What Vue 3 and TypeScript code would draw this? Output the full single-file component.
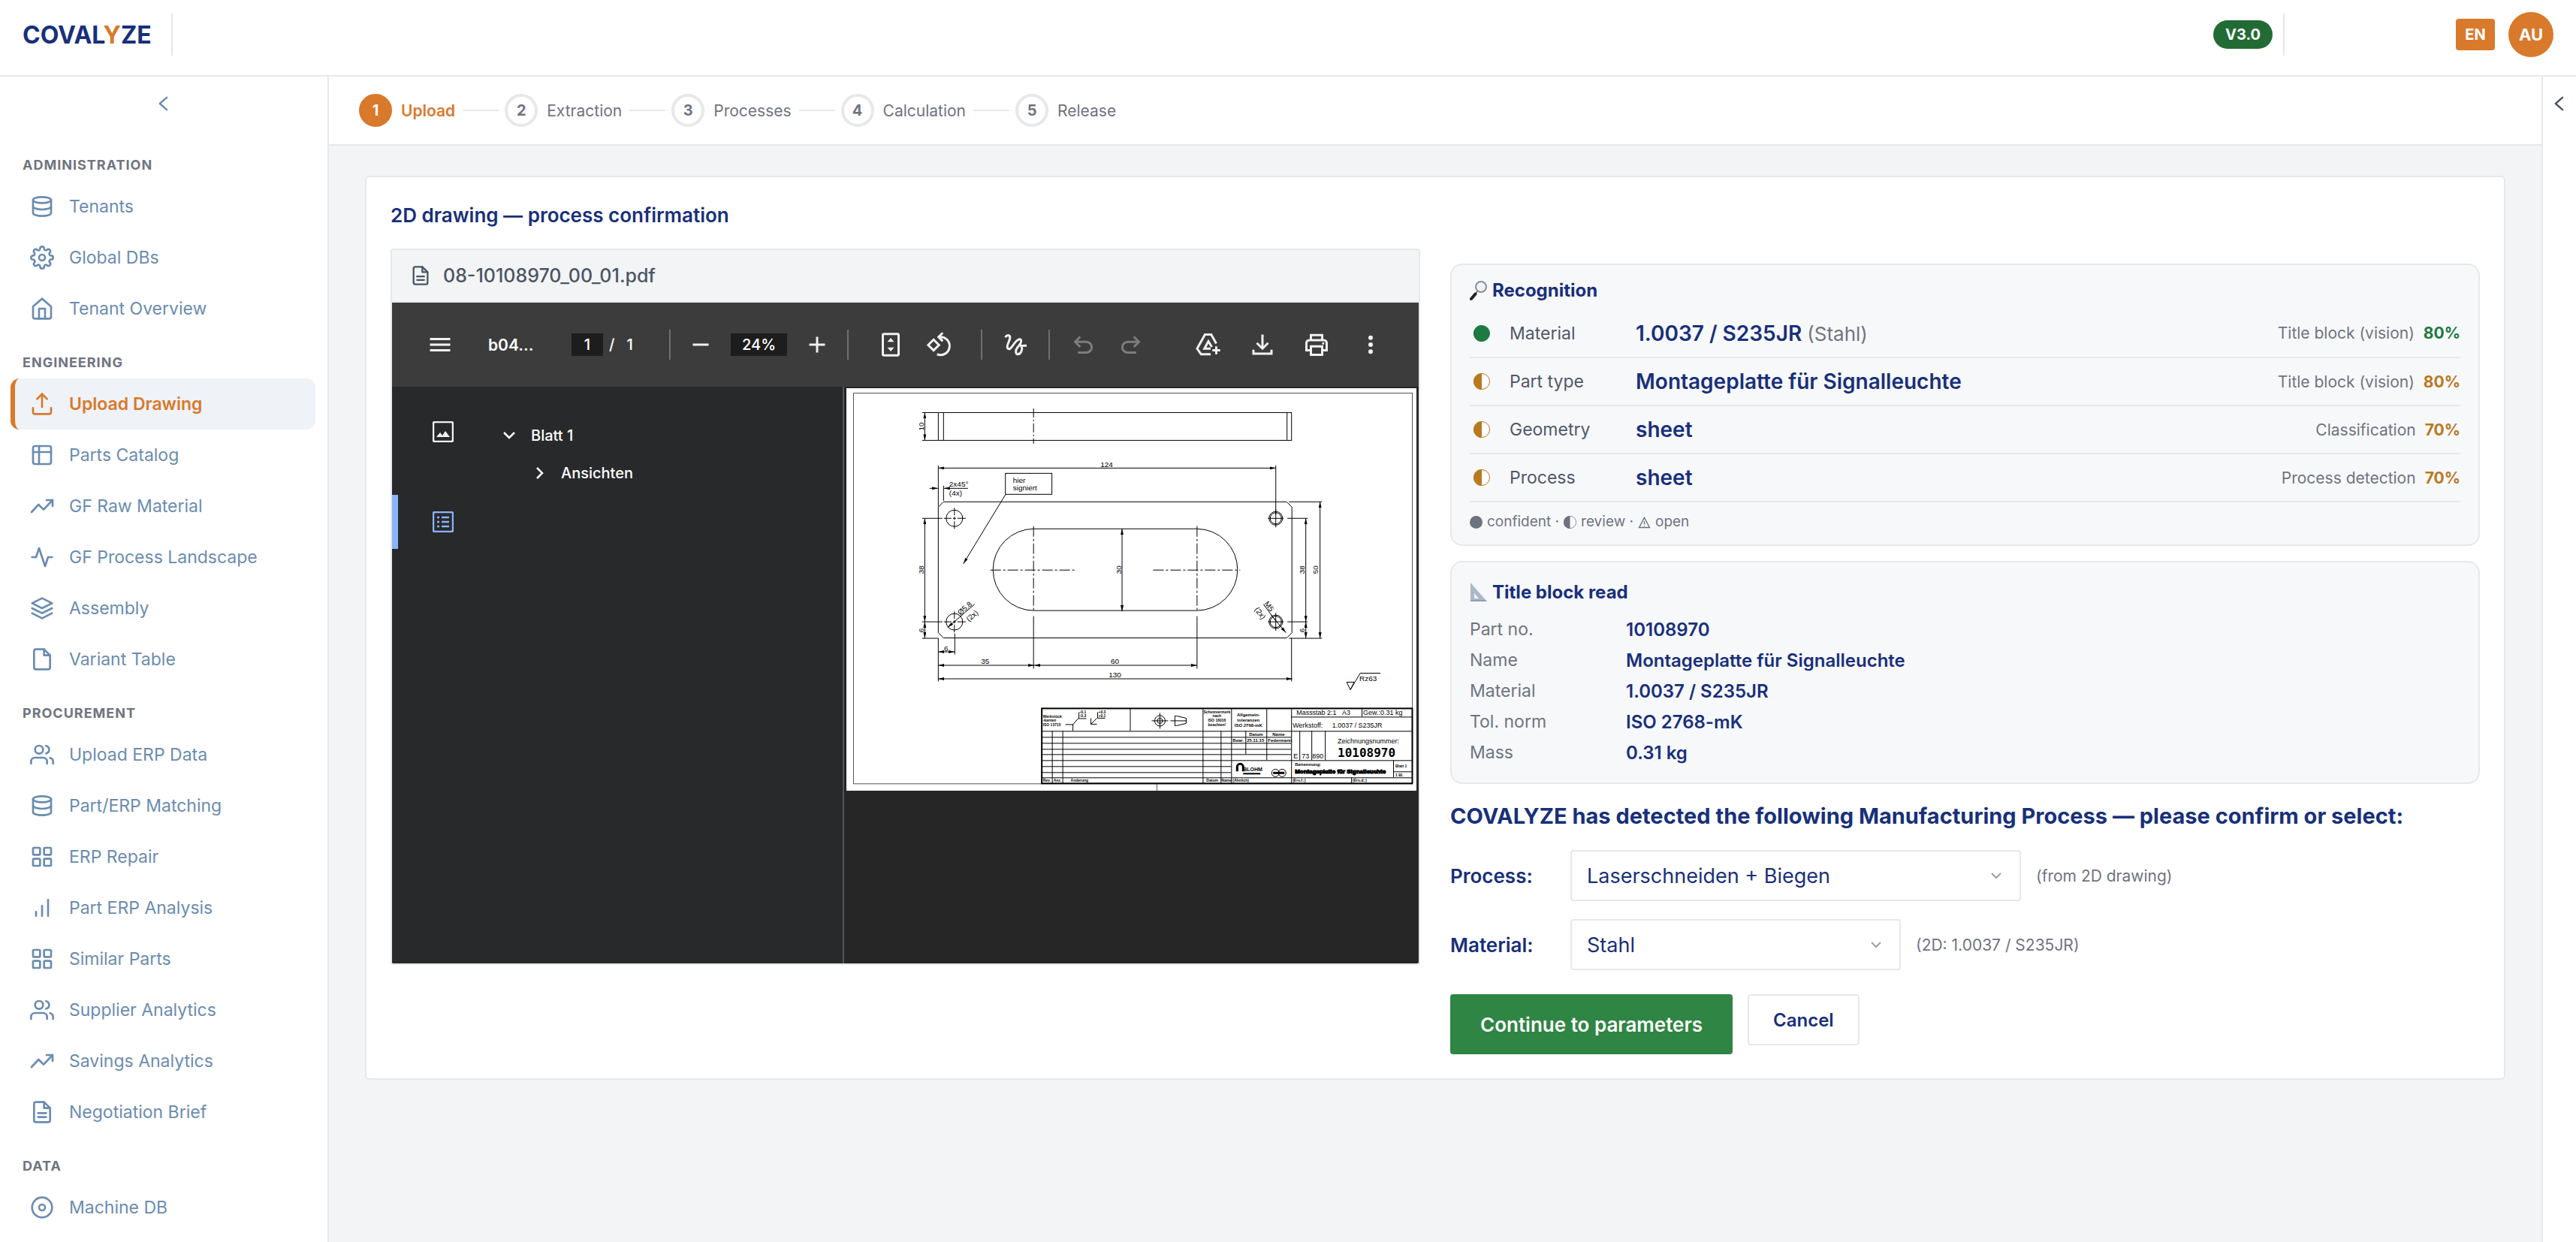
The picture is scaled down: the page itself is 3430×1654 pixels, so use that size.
<script setup lang="ts">
import { ref } from 'vue'

type Shape = { d: string; fill?: boolean }
interface NavItem { label: string; icon: string; active?: boolean }
interface NavGroup { title: string; items: NavItem[] }
interface Finding { label: string; value: string; note?: string; source: string; score: string; sure: boolean }

const icons: Record<string, string[]> = {
  database: ['M3 5.5C3 3.8 7 2.5 12 2.5s9 1.3 9 3-4 3-9 3-9-1.300-9-3z', 'M3 5.500v13c0 1.700 4 3 9 3s9-1.300 9-3v-13', 'M3 12c0 1.700 4 3 9 3s9-1.300 9-3'],
  gear: [
    'M12 9a3 3 0 1 0 0 6 3 3 0 0 0 0-6z',
    'M19.400 15a1.650 1.650 0 0 0 .33 1.820l.06.06a2 2 0 0 1 0 2.830 2 2 0 0 1-2.830 0l-.06-.06a1.650 1.650 0 0 0-1.820-.33 1.650 1.650 0 0 0-1 1.510V21a2 2 0 0 1-2 2 2 2 0 0 1-2-2v-.09A1.650 1.650 0 0 0 9 19.400a1.650 1.650 0 0 0-1.820.33l-.06.06a2 2 0 0 1-2.830 0 2 2 0 0 1 0-2.830l.06-.06a1.650 1.650 0 0 0 .33-1.820 1.650 1.650 0 0 0-1.510-1H3a2 2 0 0 1-2-2 2 2 0 0 1 2-2h.09A1.650 1.650 0 0 0 4.600 9a1.650 1.650 0 0 0-.33-1.820l-.06-.06a2 2 0 0 1 0-2.830 2 2 0 0 1 2.830 0l.06.06a1.650 1.650 0 0 0 1.820.33H9a1.650 1.650 0 0 0 1-1.510V3a2 2 0 0 1 2-2 2 2 0 0 1 2 2v.09a1.650 1.650 0 0 0 1 1.510 1.650 1.650 0 0 0 1.820-.33l.06-.06a2 2 0 0 1 2.830 0 2 2 0 0 1 0 2.830l-.06.06a1.650 1.650 0 0 0-.33 1.820V9a1.650 1.650 0 0 0 1.510 1H21a2 2 0 0 1 2 2 2 2 0 0 1-2 2h-.09a1.650 1.650 0 0 0-1.510 1z',
  ],
  home: ['M3 10l9-8 9 8v10a2 2 0 0 1-2 2H5a2 2 0 0 1-2-2z', 'M9 22V12h6v10'],
  upload: ['M3 16v4a2 2 0 0 0 2 2h14a2 2 0 0 0 2-2v-4', 'M17 7l-5-5-5 5', 'M12 2v13'],
  table: ['M5 3h14a2 2 0 0 1 2 2v14a2 2 0 0 1-2 2H5a2 2 0 0 1-2-2V5a2 2 0 0 1 2-2z', 'M3 9h18', 'M9 3v18'],
  trend: ['M1.500 18l7-7.500 5 5L22.500 6', 'M16.500 6h6v6'],
  pulse: ['M22 12h-4l-3 9L9 3l-3 9H2'],
  layers: ['M12 2L2 7l10 5 10-5z', 'M2 12l10 5 10-5', 'M2 17l10 5 10-5'],
  file: ['M14 2H6a2 2 0 0 0-2 2v16a2 2 0 0 0 2 2h12a2 2 0 0 0 2-2V8z', 'M14 2v6h6'],
  doc: ['M14 2H6a2 2 0 0 0-2 2v16a2 2 0 0 0 2 2h12a2 2 0 0 0 2-2V8z', 'M14 2v6h6', 'M8 13h8', 'M8 17h8'],
  users: ['M17 21v-2a4 4 0 0 0-4-4H5a4 4 0 0 0-4 4v2', 'M9 3a4 4 0 1 0 0 8 4 4 0 0 0 0-8z', 'M23 21v-2a4 4 0 0 0-3-3.870', 'M16 3.130a4 4 0 0 1 0 7.750'],
  grid: ['M4 3h5a1 1 0 0 1 1 1v5a1 1 0 0 1-1 1H4a1 1 0 0 1-1-1V4a1 1 0 0 1 1-1z', 'M15 3h5a1 1 0 0 1 1 1v5a1 1 0 0 1-1 1h-5a1 1 0 0 1-1-1V4a1 1 0 0 1 1-1z', 'M4 14h5a1 1 0 0 1 1 1v5a1 1 0 0 1-1 1H4a1 1 0 0 1-1-1v-5a1 1 0 0 1 1-1z', 'M15 14h5a1 1 0 0 1 1 1v5a1 1 0 0 1-1 1h-5a1 1 0 0 1-1-1v-5a1 1 0 0 1 1-1z'],
  bars: ['M18 20V4', 'M12 20V10', 'M6 20v-4'],
  disc: ['M12 2a10 10 0 1 0 0 20 10 10 0 0 0 0-20z', 'M12 9a3 3 0 1 0 0 6 3 3 0 0 0 0-6z'],
}

const toolIcons: Record<string, Shape[]> = {
  menu: [{ d: 'M3 6h18v2H3zM3 11h18v2H3zM3 16h18v2H3z', fill: true }],
  minus: [{ d: 'M5 11h14v2H5z', fill: true }],
  plus: [{ d: 'M11 5h2v6h6v2h-6v6h-2v-6H5v-2h6z', fill: true }],
  fit: [{ d: 'M6 2.500h12a1 1 0 0 1 1 1v17a1 1 0 0 1-1 1H6a1 1 0 0 1-1-1v-17a1 1 0 0 1 1-1z' }, { d: 'M12 6l3 3.500H9zM12 18l3-3.500H9z', fill: true }],
  rotate: [{ d: 'M7.400 7.500L12.200 12.300 7.400 17.100 2.600 12.300z' }, { d: 'M12.500 5.200a8 8 0 1 1-2 15.300' }, { d: 'M15.500 1.500L11.800 5.200l3.700 3.700' }],
  draw: [{ d: 'M3 5.500c2-3 5-2 4 1.500-.8 3-3 6-2 8 1.500 2.500 4-1 6-4s5-5 6-3-2 5-3.500 7-1.500 6 1 5.500 4-4 3-7c-.6-1.800-2-1.500-2.500-1.300M15 12.500c2 .8 4 .5 7 .3' }],
  undo: [{ d: 'M7.500 19H15a4.500 4.500 0 0 0 0-9.500H5' }, { d: 'M9.500 5L5 9.500 9.500 14' }],
  redo: [{ d: 'M16.500 19H9a4.500 4.500 0 0 1 0-9.500h10' }, { d: 'M14.500 5L19 9.500 14.500 14' }],
  drive: [{ d: 'M14 20.500H5.500L2 15.500 9 3h5.500l4.500 8' }, { d: 'M14 15.500H8.500L12 9l3 5' }, { d: 'M19 13.500v7M15.500 17h7' }],
  download: [{ d: 'M12 3v12' }, { d: 'M7 10.500l5 5 5-5' }, { d: 'M4 16.500V20h16v-3.500' }],
  print: [{ d: 'M7 8V3.500h10V8' }, { d: 'M7 17H3v-6.500A2.500 2.500 0 0 1 5.500 8h13a2.500 2.500 0 0 1 2.500 2.500V17h-4' }, { d: 'M7 13.500h10V21H7z' }, { d: 'M17 10h1.800v1.800H17z', fill: true }],
  more: [{ d: 'M12 3.800a2 2 0 1 1 0 4 2 2 0 0 1 0-4zM12 10a2 2 0 1 1 0 4 2 2 0 0 1 0-4zM12 16.200a2 2 0 1 1 0 4 2 2 0 0 1 0-4z', fill: true }],
}

const nav: NavGroup[] = [
  { title: 'ADMINISTRATION', items: [
    { label: 'Tenants', icon: 'database' }, { label: 'Global DBs', icon: 'gear' }, { label: 'Tenant Overview', icon: 'home' },
  ] },
  { title: 'ENGINEERING', items: [
    { label: 'Upload Drawing', icon: 'upload', active: true }, { label: 'Parts Catalog', icon: 'table' }, { label: 'GF Raw Material', icon: 'trend' },
    { label: 'GF Process Landscape', icon: 'pulse' }, { label: 'Assembly', icon: 'layers' }, { label: 'Variant Table', icon: 'file' },
  ] },
  { title: 'PROCUREMENT', items: [
    { label: 'Upload ERP Data', icon: 'users' }, { label: 'Part/ERP Matching', icon: 'database' }, { label: 'ERP Repair', icon: 'grid' },
    { label: 'Part ERP Analysis', icon: 'bars' }, { label: 'Similar Parts', icon: 'grid' }, { label: 'Supplier Analytics', icon: 'users' },
    { label: 'Savings Analytics', icon: 'trend' }, { label: 'Negotiation Brief', icon: 'doc' },
  ] },
  { title: 'DATA', items: [{ label: 'Machine DB', icon: 'disc' }] },
]

const steps = ['Upload', 'Extraction', 'Processes', 'Calculation', 'Release']

const findings: Finding[] = [
  { label: 'Material', value: '1.0037 / S235JR', note: '(Stahl)', source: 'Title block (vision)', score: '80%', sure: true },
  { label: 'Part type', value: 'Montageplatte für Signalleuchte', source: 'Title block (vision)', score: '80%', sure: false },
  { label: 'Geometry', value: 'sheet', source: 'Classification', score: '70%', sure: false },
  { label: 'Process', value: 'sheet', source: 'Process detection', score: '70%', sure: false },
]

const titleBlock = [
  ['Part no.', '10108970'],
  ['Name', 'Montageplatte für Signalleuchte'],
  ['Material', '1.0037 / S235JR'],
  ['Tol. norm', 'ISO 2768-mK'],
  ['Mass', '0.31 kg'],
]

const process = ref('Laserschneiden + Biegen')
const material = ref('Stahl')
const pageNo = ref('1')
const zoom = ref('24%')

/* Dimension lines of the drawing: x1, y1, x2, y2 */
const dims = [
  [104, 32, 104, 69], [122, 106, 572, 106], [104, 173, 104, 311], [104, 311, 104, 333], [122, 351, 144, 351],
  [122, 369, 250, 369], [250, 369, 467, 369], [122, 387, 594, 387], [612, 173, 612, 311], [612, 311, 612, 333],
  [631, 151, 631, 333], [367, 187, 367, 297],
]
const blockRows = [465, 473, 481, 488, 496, 504, 512]
</script>

<template>
  <div class="app">
    <header class="topbar">
      <a class="logo" href="#">COVAL<span>Y</span>ZE</a>
      <i class="rule"></i>
      <div class="top-right">
        <span class="version">V3.0</span>
        <i class="rule"></i>
        <button class="lang" type="button">EN</button>
        <button class="avatar" type="button">AU</button>
      </div>
    </header>

    <div class="body">
      <aside class="sidebar">
        <button class="collapse" type="button" aria-label="Collapse navigation">
          <svg width="28" height="28" viewBox="0 0 24 24"><path d="M15.500 5l-8 7 8 7" /></svg>
        </button>
        <nav>
          <section v-for="group in nav" :key="group.title">
            <h2>{{ group.title }}</h2>
            <a v-for="item in group.items" :key="item.label" href="#" class="nav-item" :class="{ active: item.active }">
              <svg width="32" height="32" viewBox="0 0 24 24"><path v-for="d in icons[item.icon]" :key="d" :d="d" /></svg>
              {{ item.label }}
            </a>
          </section>
        </nav>
      </aside>

      <div class="center">
        <ol class="steps">
          <li v-for="(step, i) in steps" :key="step" :class="{ current: i === 0 }">
            <b>{{ i + 1 }}</b><span>{{ step }}</span>
          </li>
        </ol>

        <main class="card">
          <h1>2D drawing — process confirmation</h1>
          <div class="columns">
            <section class="viewer">
              <div class="file-name">
                <svg width="28" height="28" viewBox="0 0 24 24"><path v-for="d in icons.doc" :key="d" :d="d" /></svg>
                08-10108970_00_01.pdf
              </div>
              <div class="pdf">
                <div class="toolbar">
                  <button type="button" class="tool" aria-label="Menu"><svg viewBox="0 0 24 24"><path v-for="s in toolIcons.menu" :key="s.d" :d="s.d" :class="{ solid: s.fill }" /></svg></button>
                  <span class="doc-title">b04...</span>
                  <div class="pages">
                    <input v-model="pageNo" class="page-no" aria-label="Page number" /><span>/</span><span>1</span>
                  </div>
                  <i></i>
                  <div class="zoom">
                    <button type="button" class="tool" aria-label="Zoom out"><svg viewBox="0 0 24 24"><path v-for="s in toolIcons.minus" :key="s.d" :d="s.d" :class="{ solid: s.fill }" /></svg></button>
                    <input v-model="zoom" class="zoom-level" aria-label="Zoom level" />
                    <button type="button" class="tool" aria-label="Zoom in"><svg viewBox="0 0 24 24"><path v-for="s in toolIcons.plus" :key="s.d" :d="s.d" :class="{ solid: s.fill }" /></svg></button>
                  </div>
                  <i></i>
                  <div class="pair wide">
                    <button v-for="n in ['fit', 'rotate']" :key="n" type="button" class="tool" :aria-label="n"><svg viewBox="0 0 24 24"><path v-for="s in toolIcons[n]" :key="s.d" :d="s.d" :class="{ solid: s.fill }" /></svg></button>
                  </div>
                  <i></i>
                  <div class="pair">
                    <button type="button" class="tool" aria-label="Draw"><svg viewBox="0 0 24 24"><path v-for="s in toolIcons.draw" :key="s.d" :d="s.d" /></svg></button>
                  </div>
                  <i></i>
                  <div class="pair dim">
                    <button v-for="n in ['undo', 'redo']" :key="n" type="button" class="tool" :aria-label="n"><svg viewBox="0 0 24 24"><path v-for="s in toolIcons[n]" :key="s.d" :d="s.d" /></svg></button>
                  </div>
                  <div class="actions">
                    <button v-for="n in ['drive', 'download', 'print', 'more']" :key="n" type="button" class="tool" :aria-label="n"><svg viewBox="0 0 24 24"><path v-for="s in toolIcons[n]" :key="s.d" :d="s.d" :class="{ solid: s.fill }" /></svg></button>
                  </div>
                </div>

                <div class="pdf-body">
                  <div class="rail">
                    <button type="button" aria-label="Thumbnails">
                      <svg width="28" height="28" viewBox="0 0 28 28"><rect x="1" y="1" width="26" height="26" rx="2" /><path class="solid" d="M5 21l5-6 3 4 4-6 6 8z" /></svg>
                    </button>
                    <button type="button" class="on" aria-label="Document outline">
                      <svg width="28" height="28" viewBox="0 0 28 28"><rect x="1" y="1" width="26" height="26" rx="2" /><path d="M6 8h3M6 14h3M6 20h3M12 8h10M12 14h10M12 20h10" /></svg>
                    </button>
                  </div>
                  <ul class="outline">
                    <li><svg width="18" height="18" viewBox="0 0 18 18"><path d="M2 5l7 7 7-7" /></svg>Blatt 1</li>
                    <li class="child"><svg width="18" height="18" viewBox="0 0 18 18"><path d="M6 2l7 7-7 7" /></svg>Ansichten</li>
                  </ul>
                  <div class="sheet">
                    <svg class="drawing" viewBox="0 0 760 537">
                      <defs>
                        <marker id="tip" viewBox="0 0 8 4" refX="8" refY="2" markerWidth="8" markerHeight="4" markerUnits="userSpaceOnUse" orient="auto-start-reverse"><path d="M0 0l8 2-8 2z" fill="#000" stroke="none" /></marker>
                      </defs>
                      <rect width="760" height="537" fill="#fff" stroke="none" />
                      <rect x="9.500" y="6.500" width="745" height="521" stroke="#555" />
                      <path d="M414 527v10" stroke="#555" />

                      <rect x="122.500" y="32.500" width="471" height="37" />
                      <path d="M129.500 32v37M587.500 32v37" />
                      <path d="M249.500 27v47" stroke-dasharray="12 3 2 3" />
                      <path d="M101 32.500h21M101 69.500h21" />

                      <path d="M129.500 151.500H587l7 7V326l-7 7H129.500l-7-7V158.500z" />
                      <rect x="195.500" y="187.500" width="326" height="109" rx="54.500" />
                      <path d="M249.500 184v113M467.500 184v113" stroke-dasharray="14 3 3 3" />
                      <path d="M192 242.500h115M409 242.500h116" stroke-dasharray="14 3 3 3" />
                      <path d="M249.500 304v70M467.500 304v70" />
                      <g v-for="y in [173.5, 311.5]" :key="y">
                        <circle cx="144" :cy="y" r="11" /><circle cx="572.500" :cy="y" r="9" /><circle cx="572.500" :cy="y" r="7.500" />
                        <path :d="`M130 ${y}h10m2 0h4m2 0h11M144 ${y - 14}v10m0 2v4m0 2v10M562 ${y}h21M572.5 ${y - 12}v24M101 ${y}h27M588 ${y}h27`" />
                      </g>
                      <path d="M101 333.500h21M590 151.500h44M590 333.500h44M122.500 103v55M572.500 103v66M122.500 333v58M593.500 333v58M144.500 327v28M129.500 130v20" />
                      <line v-for="d in dims" :key="d.join()" :x1="d[0] + 0.5" :y1="d[1] + 0.5" :x2="d[2] + 0.5" :y2="d[3] + 0.5" marker-start="url(#tip)" marker-end="url(#tip)" />
                      <path d="M111 133.500h11" marker-end="url(#tip)" /><path d="M162 133.500h-32" marker-end="url(#tip)" />
                      <rect x="212" y="113.500" width="62" height="28" />
                      <path d="M212 142L156 234" marker-end="url(#tip)" />
                      <path d="M171 288l-36 31" marker-end="url(#tip)" /><path d="M556 288l17 23" /><path d="M566 302l20 24" marker-end="url(#tip)" />
                      <path d="M667 392h10l-5 10zM672 402l13-22h27" />

                      <g class="note" text-anchor="middle">
                        <text x="347" y="105">124</text><text x="185" y="367">35</text><text x="358" y="367">60</text><text x="358" y="386">130</text><text x="133" y="350">6</text>
                        <text transform="translate(103 51) rotate(-90)">10</text><text transform="translate(103 242) rotate(-90)">38</text><text transform="translate(103 323) rotate(-90)">6</text>
                        <text transform="translate(366 242) rotate(-90)">30</text><text transform="translate(611 242) rotate(-90)">38</text><text transform="translate(611 323) rotate(-90)">6</text><text transform="translate(629 242) rotate(-90)">50</text>
                        <text transform="translate(160 296) rotate(-41)">Ø5.8</text><text transform="translate(170 306) rotate(-41)">(2x)</text>
                        <text transform="translate(561 293) rotate(53)">M5</text><text transform="translate(549 302) rotate(53)">(2x)</text>
                      </g>
                      <g class="note">
                        <text x="222" y="126">hier</text><text x="222" y="136">signiert</text><text x="137" y="131">2x45°</text><text x="137" y="143">(4x)</text><text x="684" y="391">Rz63</text>
                      </g>

                      <rect x="260.500" y="427" width="494" height="100" stroke-width="2" />
                      <path d="M260 457.500h494M475.500 427v100M593.500 427v100M513.500 427v100M513 496.500h241M260 519.500h494" />
                      <path v-for="y in blockRows" :key="y" :d="`M260 ${y}.5h253`" />
                      <path d="M378.500 427v30M274.500 457v70M288.500 457v70M499.500 457v70M532.500 457v31M560.500 427v69M513 465.500h80M513 473.500h80M513 481.500h80M513 488.500h80" />
                      <path d="M593 438.500h161M687.500 427v11M604.500 457v39M620.500 457v39M638.500 457v39M729.500 496v23M730 511.500h24M673.500 519v8" />
                      <circle cx="418" cy="443.500" r="7" /><circle cx="418" cy="443.500" r="3.500" /><path d="M407 443.500h22M418 433v21M432 443.500h22M438 437v13h2l13-3v-7l-13-3z" />
                      <path d="M292 448.500h10l7-8h11M302 448v9M310 440v-8M335 440h10M326 448l8-8M326 440v8h8M335 440v-8" />
                      <g class="t9">
                        <text x="600" y="436">Massstab 2:1&#160;&#160;&#160;A3</text><text x="689" y="436">Gew.:0.31 kg</text>
                        <text x="595" y="453">Werkstoff:&#160;&#160;&#160;&#160;&#160;1.0037 / S235JR</text><text x="655" y="474">Zeichnungsnummer:</text>
                        <text x="596" y="494">E</text><text x="607" y="494">73</text><text x="621" y="494">890</text>
                      </g>
                      <text class="number" x="655" y="492">10108970</text>
                      <g class="t5">
                        <text x="262" y="440">Werkstück</text><text x="262" y="445">-kanten</text><text x="262" y="451">ISO 13715</text>
                        <text x="311" y="434">-0.1</text><text x="311" y="439">-0.3</text><text x="336" y="434">+0.3</text><text x="336" y="439">+0.1</text>
                        <text x="262" y="525">Rev.</text><text x="276" y="525">Anz.</text><text x="299" y="525">Änderung</text><text x="480" y="525">Datum</text><text x="500" y="525">Name</text><text x="515" y="525">(Ähnlich)</text>
                        <text x="595" y="525">(Ers.f.:)</text><text x="675" y="525">(Ers.d.:)</text>
                        <text x="732" y="506">Blatt 1</text><text x="732" y="518">1 Bl.</text>
                        <g text-anchor="middle"><text x="494" y="434">Schutzvermerk</text><text x="494" y="439">nach</text><text x="494" y="445">ISO 16016</text><text x="494" y="451">beachten!</text></g>
                      </g>
                      <g class="t6">
                        <g text-anchor="middle"><text x="536" y="438">Allgemein-</text><text x="536" y="445">toleranzen</text><text x="536" y="452">ISO 2768-mK</text></g>
                        <text x="537" y="464">Datum</text><text x="568" y="464">Name</text><text x="515" y="472">Bear.</text><text x="534" y="472">25.11.15</text><text x="562" y="472">Federmann</text>
                        <text x="598" y="504">Benennung:</text>
                      </g>
                      <text class="part" x="598" y="514">Montageplatte für Signalleuchte</text>
                      <path d="M521 511v-6a4 4 0 0 1 8 0v6" stroke-width="3" /><text class="blohm" x="529" y="511">BLOHM</text><path d="M529 514h23" stroke-width="2" />
                      <circle cx="572" cy="513" r="5" /><circle cx="581" cy="513" r="5" /><path d="M569 513h15" stroke-width="3" />
                    </svg>
                  </div>
                </div>
              </div>
            </section>

            <section class="results">
              <div class="panel recognition">
                <h3>
                  <svg width="24" height="28" viewBox="0 0 24 28"><circle cx="15" cy="9" r="7" fill="#eef3f7" stroke="#8b8f94" stroke-width="2" /><path d="M10 15l-3 4" stroke="#777" stroke-width="2" /><path d="M7.500 18.500L2 25" stroke="#222" stroke-width="4" stroke-linecap="round" /></svg>
                  Recognition
                </h3>
                <table>
                  <tbody>
                    <tr v-for="f in findings" :key="f.label" :class="{ sure: f.sure }">
                      <td class="state"><svg width="22" height="22" viewBox="0 0 22 22"><circle cx="11" cy="11" r="10.500" /><path d="M11 0a11 11 0 0 0 0 22z" /></svg></td>
                      <th scope="row">{{ f.label }}</th>
                      <td class="value">{{ f.value }} <small v-if="f.note">{{ f.note }}</small></td>
                      <td class="source">{{ f.source }}<b>{{ f.score }}</b></td>
                    </tr>
                  </tbody>
                </table>
                <p class="legend">
                  <svg width="17" height="17" viewBox="0 0 22 22"><circle cx="11" cy="11" r="11" fill="#6b7280" /></svg>
                  confident ·
                  <svg width="17" height="17" viewBox="0 0 22 22"><circle cx="11" cy="11" r="10.500" fill="none" stroke="#6b7280" /><path d="M11 0a11 11 0 0 0 0 22z" fill="#6b7280" /></svg>
                  review ·
                  <svg width="17" height="17" viewBox="0 0 22 22"><path d="M11 3l9 17H2zM11 9v6M11 17v1.500" fill="none" stroke="#6b7280" stroke-width="1.800" /></svg>
                  open
                </p>
              </div>

              <div class="panel title-block">
                <h3>
                  <svg width="24" height="28" viewBox="0 0 24 28"><path d="M1 1v25h22zM6 15v7h6z" fill="#a9b8ca" fill-rule="evenodd" /><path d="M1 24h20l2 2H1z" fill="#8f9db3" /></svg>
                  Title block read
                </h3>
                <dl>
                  <template v-for="row in titleBlock" :key="row[0]"><dt>{{ row[0] }}</dt><dd>{{ row[1] }}</dd></template>
                </dl>
              </div>

              <h2>COVALYZE has detected the following Manufacturing Process — please confirm or select:</h2>

              <div class="field">
                <label for="process">Process:</label>
                <div class="pick process">
                  <select id="process" v-model="process"><option>Laserschneiden + Biegen</option></select>
                  <svg width="16" height="16" viewBox="0 0 16 16"><path d="M2 5l6 6 6-6" /></svg>
                </div>
                <span>(from 2D drawing)</span>
              </div>
              <div class="field">
                <label for="material">Material:</label>
                <div class="pick material">
                  <select id="material" v-model="material"><option>Stahl</option></select>
                  <svg width="16" height="16" viewBox="0 0 16 16"><path d="M2 5l6 6 6-6" /></svg>
                </div>
                <span>(2D: 1.0037 / S235JR)</span>
              </div>

              <div class="buttons">
                <button type="button" class="primary">Continue to parameters</button>
                <button type="button" class="secondary">Cancel</button>
              </div>
            </section>
          </div>
        </main>
      </div>

      <aside class="right-rail">
        <button type="button" aria-label="Expand panel">
          <svg width="28" height="28" viewBox="0 0 24 24"><path d="M15.500 5l-8 7 8 7" /></svg>
        </button>
      </aside>
    </div>
  </div>
</template>

<style>
body {
  margin: 0;
  background: #f2f4f6;
}
</style>

<style scoped>
* {
  box-sizing: border-box;
}
.app {
  --navy: #18307a;
  --orange: #d9792b;
  --line: #e6e8ea;
  --gray: #6f7480;
  --blue: #6b8cb0;
  display: flex;
  flex-direction: column;
  height: 100vh;
  overflow: hidden;
  font-family: Inter, "Liberation Sans", sans-serif;
  color: var(--navy);
}
button,
input,
select {
  font: inherit;
  margin: 0;
  padding: 0;
  border: 0;
  background: none;
  color: inherit;
}
h1, h2, h3, p, ul, ol, dl, dd {
  margin: 0;
  padding: 0;
}
ul, ol {
  list-style: none;
}
a {
  text-decoration: none;
}
svg {
  display: block;
  flex: none;
}

.topbar {
  flex: none;
  display: flex;
  align-items: center;
  height: 102px;
  padding: 0 30px 8px;
  background: #fff;
  border-bottom: 2px solid var(--line);
}
.logo {
  font-size: 32px;
  font-weight: 700;
  color: var(--navy);
}
.logo span {
  color: var(--orange);
}
.rule {
  width: 2px;
  height: 56px;
  margin-left: 26px;
  background: var(--line);
}
.top-right {
  display: flex;
  align-items: center;
  margin-left: auto;
}
.version {
  padding: 0 16px;
  border-radius: 20px;
  background: #236b35;
  color: #fff;
  font-size: 20px;
  font-weight: 700;
  line-height: 38px;
}
.top-right .rule {
  margin-left: 14px;
}
.lang {
  width: 52px;
  height: 42px;
  margin-left: 228px;
  border-radius: 4px;
  background: var(--orange);
  color: #fff;
  font-size: 20px;
  font-weight: 700;
}
.avatar {
  width: 60px;
  height: 60px;
  margin-left: 18px;
  border-radius: 50%;
  background: var(--orange);
  color: #fff;
  font-size: 22px;
  font-weight: 700;
}

.body {
  flex: 1;
  display: grid;
  grid-template-columns: 438px minmax(0, 1fr) 46px;
  min-height: 0;
}
.sidebar {
  background: #fff;
  border-right: 2px solid var(--line);
  overflow: hidden;
}
.collapse,
.right-rail button {
  display: flex;
  align-items: center;
  justify-content: center;
  width: 100%;
  height: 72px;
}
.collapse {
  margin-bottom: 8px;
}
.collapse path,
.right-rail path,
.nav-item path,
.file-name path {
  fill: none;
  stroke: var(--blue);
  stroke-width: 2;
  stroke-linecap: round;
  stroke-linejoin: round;
}
.sidebar h2 {
  height: 59px;
  padding: 26px 30px 9px;
  color: #6f7480;
  font-size: 18px;
  font-weight: 700;
  line-height: 24px;
  letter-spacing: 1px;
}
.nav-item {
  display: flex;
  align-items: center;
  gap: 20px;
  height: 68px;
  margin: 0 16px 0 14px;
  padding-left: 20px;
  border-left: 6px solid transparent;
  border-radius: 12px;
  color: var(--blue);
  font-size: 23px;
}
.nav-item.active {
  background: #eff2f7;
  border-color: var(--orange);
  color: var(--orange);
  font-weight: 600;
}
.nav-item.active path {
  stroke: var(--orange);
}
.right-rail {
  background: #fff;
  border-left: 2px solid var(--line);
}
.right-rail path {
  stroke: #4b5563;
}

.steps {
  display: flex;
  align-items: center;
  gap: 10px;
  height: 92px;
  padding-left: 40px;
  background: #fff;
  border-bottom: 2px solid var(--line);
}
.steps li {
  display: flex;
  align-items: center;
  gap: 12px;
  color: var(--gray);
  font-size: 21px;
}
.steps li + li::before {
  content: "";
  width: 48px;
  height: 2px;
  margin-right: -4px;
  background: var(--line);
}
.steps b {
  width: 44px;
  height: 44px;
  border: 4px solid var(--line);
  border-radius: 50%;
  font-size: 20px;
  font-weight: 700;
  line-height: 36px;
  text-align: center;
}
.steps .current {
  color: var(--orange);
  font-weight: 600;
}
.current b {
  border-color: var(--orange);
  background: var(--orange);
  color: #fff;
}

.card {
  margin: 40px 48px;
  padding: 35px 32px 32px;
  border: 2px solid var(--line);
  border-radius: 6px;
  background: #fff;
}
.card h1 {
  margin-bottom: 28px;
  font-size: 26px;
  font-weight: 600;
  line-height: 32px;
}
.columns {
  display: grid;
  grid-template-columns: minmax(0, 1fr) minmax(0, 1fr);
  align-items: start;
  gap: 40px;
}
.viewer {
  border: 2px solid var(--line);
  border-radius: 4px;
  overflow: hidden;
}
.file-name {
  display: flex;
  align-items: center;
  gap: 16px;
  height: 70px;
  padding-left: 24px;
  border-bottom: 2px solid var(--line);
  background: #f2f4f6;
  color: #4b5563;
  font-size: 25px;
  font-weight: 500;
}
.file-name path {
  stroke: #4b5563;
}
.pdf {
  display: flex;
  flex-direction: column;
  height: 880px;
  color: #fff;
  font-size: 20px;
  font-weight: 500;
}
.toolbar {
  flex: none;
  display: flex;
  align-items: center;
  height: 112px;
  padding: 0 32px;
  background: #3c3c3c;
}
.tool {
  display: flex;
  align-items: center;
  justify-content: center;
  width: 64px;
  height: 64px;
}
.tool svg {
  width: 36px;
  height: 36px;
}
.tool path {
  fill: none;
  stroke: #f1f1f1;
  stroke-width: 2;
}
.tool path.solid {
  fill: #f1f1f1;
  stroke: none;
}
.toolbar > i {
  width: 2px;
  height: 40px;
  background: #707070;
}
.doc-title {
  width: 91px;
  margin: 0 20px 0 32px;
  font-size: 21px;
  font-weight: 600;
}
.pages {
  display: flex;
  align-items: center;
  width: 130px;
}
.pages span {
  margin-left: 8px;
}
.pages span + span {
  margin-left: 16px;
}
.page-no,
.zoom-level {
  height: 30px;
  background: #1d1d1d;
  text-align: center;
}
.page-no {
  width: 42px;
}
.zoom-level {
  width: 75px;
}
.zoom {
  display: flex;
  align-items: center;
  gap: 8px;
  padding: 0 8px;
}
.pair {
  display: flex;
  padding: 0 12px;
}
.pair.wide {
  padding: 0 24px;
}
.pair.dim path {
  stroke: #7d7d7d;
}
.actions {
  display: flex;
  gap: 8px;
  margin-left: auto;
}
.pdf-body {
  flex: 1;
  display: flex;
  background: #262626;
}
.rail {
  width: 136px;
  padding-top: 24px;
  background: #28292b;
}
.rail button {
  display: flex;
  align-items: center;
  justify-content: center;
  width: 100%;
  height: 72px;
  margin-bottom: 48px;
}
.rail .on {
  border-left: 8px solid #8ab4f8;
  border-radius: 0 6px 6px 0;
  padding-right: 8px;
}
.rail rect,
.rail path {
  fill: none;
  stroke: #f1f1f1;
  stroke-width: 2.5;
}
.rail path.solid {
  fill: #f1f1f1;
  stroke: none;
}
.rail .on rect,
.rail .on path {
  stroke: #8ab4f8;
}
.outline {
  width: 466px;
  padding-top: 40px;
  border-right: 2px solid #555;
  background: #28292b;
}
.outline li {
  display: flex;
  align-items: center;
  gap: 20px;
  height: 50px;
  padding-left: 11px;
}
.outline .child {
  padding-left: 51px;
}
.outline path {
  fill: none;
  stroke: #fff;
  stroke-width: 2.5;
}
.sheet {
  flex: 1;
  min-width: 0;
  padding: 2px 3px;
}
.drawing {
  width: 100%;
  fill: none;
  stroke: #000;
  stroke-width: 1;
  font-family: "Liberation Sans", Arial, sans-serif;
}
.drawing text {
  fill: #000;
  stroke: none;
  font-weight: 400;
}
.drawing .note text {
  font-family: "Liberation Sans Narrow", "Liberation Sans", sans-serif;
  font-size: 10px;
}
.drawing .t9 text {
  font-size: 9px;
}
.drawing .t6 text {
  font-size: 6px;
  font-weight: 700;
}
.drawing .t5 text {
  font-size: 5px;
  font-weight: 700;
}
.drawing .number {
  font-family: "DejaVu Sans Mono", monospace;
  font-size: 16px;
  font-weight: 700;
}
.drawing .part {
  font-size: 8px;
  font-weight: 700;
  stroke: #000;
}
.drawing .blohm {
  font-size: 7px;
  font-weight: 700;
}

.results {
  padding-top: 20px;
}
.panel {
  margin-bottom: 20px;
  border: 2px solid var(--line);
  border-radius: 16px;
  background: #f7f8fa;
}
.panel h3 {
  display: flex;
  align-items: center;
  gap: 6px;
  font-size: 24px;
  font-weight: 700;
  line-height: 28px;
}
.recognition {
  padding: 20px 24px 14px;
}
.recognition h3 {
  margin-bottom: 11px;
}
table {
  width: 100%;
  border-collapse: collapse;
}
tr {
  height: 64px;
  border-bottom: 2px solid var(--line);
}
td,
th {
  padding: 0;
  text-align: left;
}
.state {
  width: 53px;
  padding-left: 5px;
}
.state circle {
  fill: #fff;
  stroke: #b9791f;
}
.state path {
  fill: #b9791f;
}
.sure .state circle {
  fill: #1d7a41;
  stroke: #1d7a41;
}
.sure .state path {
  fill: #1d7a41;
}
th {
  width: 168px;
  color: #4f5868;
  font-size: 23px;
  font-weight: 400;
}
.value {
  font-size: 28px;
  font-weight: 600;
}
.value small {
  color: var(--gray);
  font-size: 26px;
  font-weight: 400;
}
.source {
  color: var(--gray);
  font-size: 21px;
  text-align: right;
}
.source b {
  margin-left: 12px;
  color: #b9791f;
  font-weight: 700;
}
.sure .source b {
  color: #1d7a41;
}
.legend {
  display: flex;
  align-items: center;
  gap: 6px;
  margin-top: 10px;
  color: var(--gray);
  font-size: 19px;
  line-height: 32px;
}
.title-block {
  padding: 26px 24px 19px;
}
.title-block h3 {
  margin-bottom: 15px;
}
dl {
  display: grid;
  grid-template-columns: 208px 1fr;
  font-size: 23px;
  line-height: 41px;
}
dt {
  color: var(--gray);
}
dd {
  font-size: 24px;
  font-weight: 600;
}
.results h2 {
  margin: 23px 0 25px;
  font-size: 29px;
  font-weight: 700;
  line-height: 40px;
}
.field {
  display: flex;
  align-items: center;
  margin-bottom: 24px;
}
.field label {
  width: 160px;
  font-size: 26px;
  font-weight: 600;
}
.field span {
  margin-left: 20px;
  color: var(--gray);
  font-size: 21px;
}
.pick {
  display: grid;
  align-items: center;
}
.pick.process {
  width: 600px;
}
.pick.material {
  width: 440px;
}
.pick select {
  grid-area: 1 / 1;
  height: 68px;
  padding-left: 20px;
  border: 2px solid var(--line);
  border-radius: 4px;
  background: #fff;
  font-size: 27px;
  appearance: none;
}
.pick svg {
  grid-area: 1 / 1;
  justify-self: end;
  margin-right: 25px;
  pointer-events: none;
}
.pick path {
  fill: none;
  stroke: #9aa0a8;
  stroke-width: 2;
}
.buttons {
  display: flex;
  align-items: flex-start;
  gap: 20px;
  margin-top: 32px;
}
.primary {
  height: 80px;
  padding: 0 40px;
  border-radius: 4px;
  background: #2f8543;
  color: #fff;
  font-size: 26px;
  font-weight: 600;
}
.secondary {
  height: 68px;
  padding: 0 32px;
  border: 2px solid var(--line);
  border-radius: 4px;
  background: #fff;
  font-size: 24px;
  font-weight: 600;
}
</style>
